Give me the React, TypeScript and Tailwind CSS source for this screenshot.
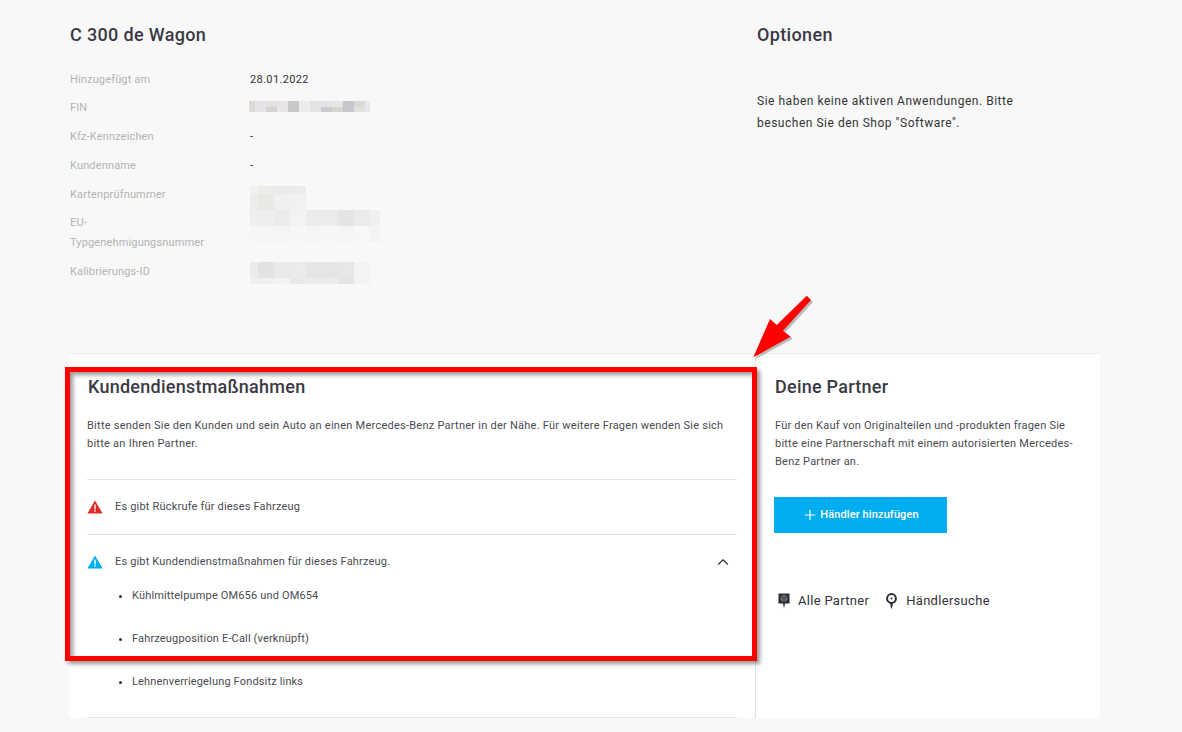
import type { ReactNode } from 'react';
import { ChevronUp, Plus } from 'lucide-react';

const bg = '#f8f8f8';
const mosaicCols = [8, 16, 16, 16, 16, 16, 16, 16, 10];

function Mosaic({ rows, cols, heights }: { rows: string[][]; cols: number[]; heights: number[] }) {
  const width = cols.reduce((a, b) => a + b, 0);
  const height = heights.reduce((a, b) => a + b, 0);
  let y = 0;
  return (
    <svg width={width} height={height} className="block">
      {rows.map((row, r) => {
        let x = 0;
        const top = y;
        y += heights[r];
        return row.map((c, i) => {
          const left = x;
          x += cols[i];
          return <rect key={`${r}-${i}`} x={left} y={top} width={cols[i]} height={heights[r]} fill={c} />;
        });
      })}
    </svg>
  );
}

function Row({ label, top, children }: { label: string; top: number; children: ReactNode }) {
  return (
    <div className="flex h-[18px] leading-[18px]" style={{ marginTop: top }}>
      <dt className="w-[180px] tracking-[0.15px] text-[#b3b3b3]">{label}</dt>
      <dd className="tracking-[0.36px]">{children}</dd>
    </div>
  );
}

function Triangle({ color }: { color: string }) {
  return (
    <svg width="16" height="14" viewBox="0 0 16 14" className="shrink-0">
      <path d="M8 0.5 L15.6 13.5 H0.4 Z" fill={color} />
      <rect x="7.3" y="4.6" width="1.4" height="4.8" fill="#fff" />
      <rect x="7.3" y="10.2" width="1.4" height="1.5" fill="#fff" />
    </svg>
  );
}

export default function App() {
  return (
    <div className="relative h-[732px] w-[1182px] overflow-hidden bg-[#f8f8f8] font-['Roboto',sans-serif] text-[#2b2b33]">
      <div className="flex h-[353px] pl-[70px] pt-[23px]">
        <section className="w-[687px]">
          <h1 className="text-[18px] font-medium leading-[24px] tracking-[0.35px] text-[#3a3a44]">C 300 de Wagon</h1>
          <dl className="mt-[24px] text-[11px]">
            <Row label="Hinzugefügt am" top={0}><span className="text-[#333]">28.01.2022</span></Row>
            <Row label="FIN" top={10}>
              <div className="-ml-px pt-[2px]">
                <Mosaic
                  cols={[6, 11, 11, 11, 11, 11, 11, 11, 11, 11, 11, 5]}
                  heights={[6, 5]}
                  rows={[
                    ['#dcd9d6', '#e3e3ea', '#e3e1e1', '#e6e6e6', '#c8c8ca', '#ececea', '#e3e3e5', '#e3e3e5', '#e8e6e3', '#c5c7cd', '#d9d8d4', '#e6e8ea'],
                    ['#dcd9d6', '#e3e3ea', '#d8d2d4', '#e6e6e6', '#c8c8ca', '#ececea', '#e3e3e5', '#c9cbce', '#d6d5d2', '#c5c7cd', '#e0e0dc', '#e6e8ea'],
                  ]}
                />
              </div>
            </Row>
            <Row label="Kfz-Kennzeichen" top={11}><span>-</span></Row>
            <Row label="Kundenname" top={11}><span>-</span></Row>
            <div className="mt-[11px] flex">
              <div className="w-[180px] tracking-[0.15px] text-[#b3b3b3]">
                <dt className="h-[18px] leading-[18px]">Kartenprüfnummer</dt>
                <dt className="mt-[9px] w-[150px] leading-[20px]">EU-<br />Typgenehmigungsnummer</dt>
              </div>
              <dd>
                <Mosaic
                  cols={mosaicCols}
                  heights={[8, 16, 16, 16]}
                  rows={[
                    ['#f1f1f1', '#ecece8', '#ebebeb', '#ececec', bg, bg, bg, bg, bg],
                    ['#ececec', '#e8e8e5', '#f0f0f0', '#f1f1f1', bg, bg, bg, bg, bg],
                    ['#efefef', '#eeeeee', '#ebebeb', '#f3f3f3', '#ebebeb', '#ebebeb', '#e4e4e4', '#ebebeb', '#f0f0f0'],
                    ['#f6f6f6', '#f5f5f5', '#f4f5f5', '#f6f6f6', '#f5f5f5', '#f6f6f6', '#f4f5f5', '#f7f7f7', '#f3f3f3'],
                  ]}
                />
              </dd>
            </div>
            <Row label="Kalibrierungs-ID" top={10}>
              <div className="-mt-[1px]">
                <Mosaic
                  cols={[8, 16, 16, 16, 16, 16, 16, 16]}
                  heights={[16, 6]}
                  rows={[
                    ['#ebebeb', '#e2e2e2', '#e9eaec', '#ebebeb', '#e5e5e5', '#e5e5e5', '#e6e7e7', '#f3f3f3'],
                    ['#f0f0f0', '#efeff0', '#f3f3f3', '#e9e9e9', '#ebebeb', '#ececec', '#e4e4e4', '#f3f3f3'],
                  ]}
                />
              </div>
            </Row>
          </dl>
        </section>
        <section>
          <h2 className="text-[18px] font-medium leading-[24px] tracking-[0.35px] text-[#3a3a44]">Optionen</h2>
          <p className="mt-[43px] w-[290px] text-[12px] leading-[22px] tracking-[0.52px] text-[#333]">
            Sie haben keine aktiven Anwendungen. Bitte besuchen Sie den Shop "Software".
          </p>
        </section>
      </div>

      <div className="ml-[69px] flex h-[365px] w-[1031px] border-t border-[#ececec] bg-white">
        <section className="w-[687px] border-r border-[#e4e4e4] pl-[18px] pt-[21px]">
          <h2 className="ml-px text-[18px] font-medium leading-[24px] tracking-[0.25px] text-[#3a3a44]">Kundendienstmaßnahmen</h2>
          <p className="mt-[18px] w-[650px] text-[11px] leading-[18px] tracking-[0.25px] text-[#4a4a52]">
            Bitte senden Sie den Kunden und sein Auto an einen Mercedes-Benz Partner in der Nähe. Für weitere Fragen wenden Sie sich bitte an Ihren Partner.
          </p>
          <div className="mt-[26px] flex h-[55px] w-[650px] items-center gap-[12px] border-t border-[#e4e4e4] text-[11px] tracking-[0.19px] text-[#4a4a52]">
            <Triangle color="#dc2a2a" />
            <span>Es gibt Rückrufe für dieses Fahrzeug</span>
          </div>
          <div className="w-[650px] border-y border-[#e4e4e4] pb-[27px]">
            <div className="mt-[19px] flex h-[16px] items-center gap-[12px] pr-[5px] text-[11px] tracking-[0.17px] text-[#4a4a52]">
              <Triangle color="#00adef" />
              <span>Es gibt Kundendienstmaßnahmen für dieses Fahrzeug.</span>
              <ChevronUp className="ml-auto h-[18px] w-[18px] text-[#333]" strokeWidth={1.5} />
            </div>
            <ul className="ml-[45px] mt-[18px] list-disc text-[11px] leading-[16px] tracking-[0.16px] text-[#4a4a52] marker:text-[#333]">
              <li>Kühlmittelpumpe OM656 und OM654</li>
              <li className="mt-[27px]">Fahrzeugposition E-Call (verknüpft)</li>
              <li className="mt-[27px]">Lehnenverriegelung Fondsitz links</li>
            </ul>
          </div>
        </section>
        <section className="pl-[19px] pt-[21px]">
          <h2 className="text-[18px] font-medium leading-[24px] tracking-[0.25px] text-[#3a3a44]">Deine Partner</h2>
          <p className="mt-[18px] w-[300px] text-[11px] leading-[18px] tracking-[0.22px] text-[#4a4a52]">
            Für den Kauf von Originalteilen und -produkten fragen Sie bitte eine Partnerschaft mit einem autorisierten Mercedes-Benz Partner an.
          </p>
          <button className="-ml-px mt-[26px] flex h-[36px] w-[173px] items-center justify-center gap-[2px] bg-[#00adef] text-[11px] font-medium tracking-[0.12px] text-white">
            <Plus className="h-[16px] w-[16px]" strokeWidth={1.75} /> Händler hinzufügen
          </button>
          <div className="mt-[58px] flex items-center pl-[3px] text-[13px] tracking-[0.3px] text-[#33333b]">
            <svg width="12" height="16" viewBox="0 0 12 16" className="mr-[8px]">
              <path d="M0.5 0.5 H11.5 V10.5 H7 L6 15.5 L5 10.5 H0.5 Z" fill="#2b2b33" />
              <circle cx="6" cy="5.4" r="2.9" fill="none" stroke="#aaa" strokeWidth="0.7" />
              <path d="M6 2.5 V5.4 L3.5 7 M6 5.4 L8.5 7" fill="none" stroke="#aaa" strokeWidth="0.7" />
            </svg>
            <span>Alle Partner</span>
            <svg width="13" height="16" viewBox="0 0 13 16" className="ml-[16px] mr-[8px]">
              <circle cx="6.5" cy="5.5" r="4.4" fill="none" stroke="#2b2b33" strokeWidth="2" />
              <circle cx="6.5" cy="5.5" r="1" fill="#2b2b33" />
              <path d="M5 9.5 H8 L6.9 15.5 H6.1 Z" fill="#2b2b33" />
            </svg>
            <span>Händlersuche</span>
          </div>
        </section>
      </div>

      {/* annotation over the page */}
      <div className="pointer-events-none absolute left-[65px] top-[367px] h-[294px] w-[692px] border-[5px] border-[#ff0000] shadow-[3px_3px_4px_rgba(0,0,0,0.4),inset_3px_3px_4px_rgba(0,0,0,0.4)]" />
      <svg className="pointer-events-none absolute left-[745px] top-[290px]" width="75" height="75" viewBox="0 0 75 75">
        <path d="M61.7 5.7 L66 10 L38 40.7 L45.7 46.7 L8.3 67.3 L25 29 L31.7 35 Z" fill="#000" opacity="0.25" transform="translate(2 2)" />
        <path d="M61.7 5.7 L66 10 L38 40.7 L45.7 46.7 L8.3 67.3 L25 29 L31.7 35 Z" fill="#ff0000" />
      </svg>
    </div>
  );
}
